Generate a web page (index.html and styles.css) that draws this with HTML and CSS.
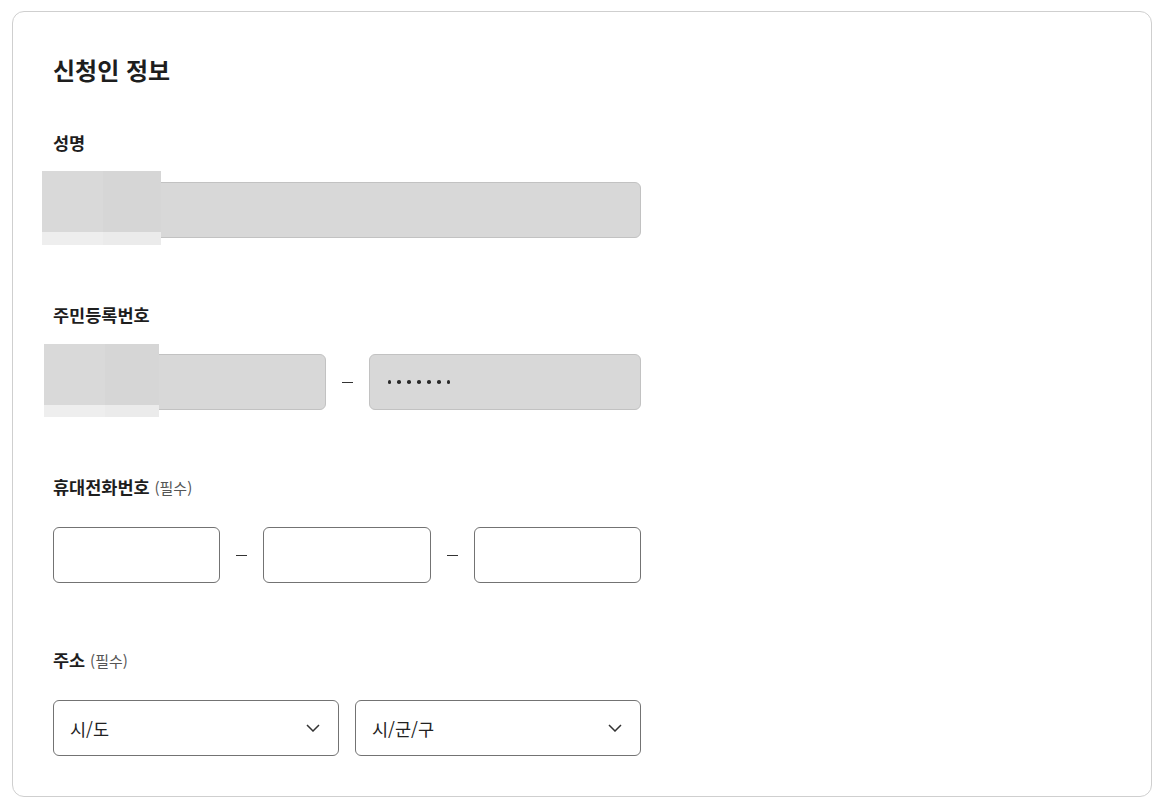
FILE: index.html
```html
<!DOCTYPE html>
<html lang="ko">
<head>
<meta charset="utf-8">
<link rel="stylesheet" href="styles.css">
</head>
<body>
<div class="card">
  <h2 class="title">신청인 정보</h2>

  <div class="field">
    <div class="label">성명</div>
    <div class="row">
      <div class="box filled full"></div>
      <div class="mosaic m1"><span class="c a"></span><span class="c b"></span><span class="c d"></span><span class="c e"></span></div>
    </div>
  </div>

  <div class="field">
    <div class="label">주민등록번호</div>
    <div class="row">
      <div class="box filled"></div>
      <span class="dash"><i></i></span>
      <div class="box filled"><span class="dots" aria-label="•••••••"><b></b><b></b><b></b><b></b><b></b><b></b><b></b></span></div>
      <div class="mosaic m2"><span class="c a"></span><span class="c b"></span><span class="c d"></span><span class="c e"></span></div>
    </div>
  </div>

  <div class="field">
    <div class="label">휴대전화번호 <span class="req">(필수)</span></div>
    <div class="row">
      <div class="box"></div>
      <span class="dash"><i></i></span>
      <div class="box"></div>
      <span class="dash"><i></i></span>
      <div class="box"></div>
    </div>
  </div>

  <div class="field">
    <div class="label">주소 <span class="req">(필수)</span></div>
    <div class="row sel-row">
      <div class="box select"><span>시/도</span><svg width="14" height="8" viewBox="0 0 14 8"><path d="M1 1l6 6 6-6" fill="none" stroke="#333" stroke-width="1.5"/></svg></div>
      <div class="box select"><span>시/군/구</span><svg width="14" height="8" viewBox="0 0 14 8"><path d="M1 1l6 6 6-6" fill="none" stroke="#333" stroke-width="1.5"/></svg></div>
    </div>
  </div>
</div>
</body>
</html>
```
FILE: styles.css
```css
* { box-sizing: border-box; }
html, body { margin: 0; padding: 0; background: #fff; }
body {
  padding: 11px 12px 0 12px;
  font-family: "Noto Sans CJK KR", "Noto Sans", sans-serif;
  color: #222;
}
.card {
  width: 1140px;
  height: 786px;
  border: 1px solid #cfcfcf;
  border-radius: 12px;
  padding: 41px 40px 40px 40px;
}
.title {
  margin: 0;
  font-size: 24px;
  line-height: 34px;
  font-weight: 700;
  color: #1e1e1e;
}
.field { width: 588px; margin-top: 44px; }
.field + .field { margin-top: 65px; }
.label {
  font-size: 17.5px;
  line-height: 24px;
  font-weight: 700;
  color: #1e1e1e;
}
.req { font-size: 15px; font-weight: 400; color: #555; }
.row {
  position: relative;
  margin-top: 27px;
  display: flex;
  align-items: center;
}
.box {
  flex: 1;
  height: 56px;
  border: 1px solid #737373;
  border-radius: 6px;
  background: #fff;
  display: flex;
  align-items: center;
}
.box.filled { background: #d8d8d8; border-color: #c2c2c2; }
.dash {
  width: 43px;
  flex: none;
  display: flex;
  justify-content: center;
}
.dash i {
  display: block;
  width: 11px;
  height: 1px;
  background: #333;
}
.dots {
  margin-left: 18px;
  display: flex;
  gap: 6.3px;
}
.dots b {
  display: block;
  width: 3.6px;
  height: 3.6px;
  border-radius: 50%;
  background: #2a2a2a;
}
.sel-row { gap: 16px; }
.select {
  justify-content: space-between;
  padding: 0 18px 0 16px;
  font-size: 17.5px;
  color: #222;
}
.mosaic {
  position: absolute;
  display: grid;
}
.mosaic .c { display: block; }
.m1 { left: -11px; top: -11px; width: 119px; height: 74px; grid-template-columns: 61px 58px; grid-template-rows: 61px 13px; }
.m2 { left: -9px; top: -10px; width: 115px; height: 73px; grid-template-columns: 61px 54px; grid-template-rows: 61px 12px; }
.c.a { background: #d9d9d9; }
.c.b { background: #d6d6d6; }
.c.d { background: #eeeeee; }
.c.e { background: #ebebeb; }
```
